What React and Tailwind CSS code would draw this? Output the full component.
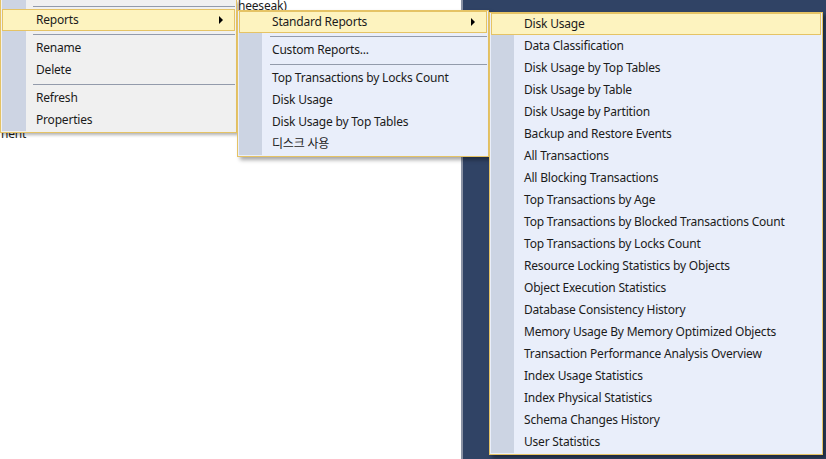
import React from "react";

const FONT = "font-['Noto_Sans','Noto_Sans_CJK_KR',sans-serif]";

const menu1 = [
  { sep: true },
  { label: "Reports", active: true, sub: true },
  { sep: true },
  { label: "Rename" },
  { label: "Delete" },
  { sep: true },
  { label: "Refresh" },
  { label: "Properties" },
];

const menu2 = [
  { label: "Standard Reports", active: true, sub: true },
  { sep: true },
  { label: "Custom Reports..." },
  { sep: true },
  { label: "Top Transactions by Locks Count" },
  { label: "Disk Usage" },
  { label: "Disk Usage by Top Tables" },
  { label: "디스크 사용" },
];

const menu3 = [
  "Disk Usage",
  "Data Classification",
  "Disk Usage by Top Tables",
  "Disk Usage by Table",
  "Disk Usage by Partition",
  "Backup and Restore Events",
  "All Transactions",
  "All Blocking Transactions",
  "Top Transactions by Age",
  "Top Transactions by Blocked Transactions Count",
  "Top Transactions by Locks Count",
  "Resource Locking Statistics by Objects",
  "Object Execution Statistics",
  "Database Consistency History",
  "Memory Usage By Memory Optimized Objects",
  "Transaction Performance Analysis Overview",
  "Index Usage Statistics",
  "Index Physical Statistics",
  "Schema Changes History",
  "User Statistics",
].map((label, i) => ({ label, active: i === 0 }));

function MenuItems({ items, textPad = "pl-[32px]" }) {
  return items.map((it, i) =>
    it.sep ? (
      <div key={i} className="h-[6px] pl-[31px] flex items-center">
        <div className="h-px w-full bg-[#939bab]" />
      </div>
    ) : (
      <div
        key={i}
        className={`h-[22px] flex items-center ${textPad} pr-[11px] border ${
          it.active ? "border-[#e5c365] bg-[#fdf3bf]" : "border-transparent"
        }`}
      >
        <span className="flex-1 whitespace-nowrap">{it.label}</span>
        {it.sub && <span className="w-0 h-0 border-y-[4px] border-y-transparent border-l-[4px] border-l-black" />}
      </div>
    )
  );
}

export default function App() {
  return (
    <div className={`relative w-[826px] h-[459px] overflow-hidden flex text-[12px] leading-[16px] tracking-[-0.2px] text-[#1b1b1b] ${FONT}`}>
      {/* window behind the menus */}
      <div className="w-[461px] bg-white flex flex-col">
        <div className="h-[10px] ml-[236px] flex items-end border-l border-[#8d95a5] pl-px overflow-hidden">
          <span className="leading-[12px] -mb-[2px]">heeseak)</span>
        </div>
        <div className="mt-[117px] pl-px leading-[14px]">nent</div>
      </div>
      <div className="w-[2px] bg-[#8a92a4]" />
      <div className="flex-1 bg-[#304365]" />

      {/* context menu */}
      <div className="absolute left-0 top-0 w-[237px] border border-t-0 border-[#e5c365] bg-[#f0f0f0] px-px pb-px shadow-[2px_2px_3px_rgba(0,0,0,0.3)]">
        <div className="bg-[linear-gradient(to_right,#cdd4e3_24px,transparent_24px)] pt-[3px]">
          <MenuItems items={menu1} textPad="pl-[33px]" />
        </div>
      </div>

      {/* reports submenu */}
      <div className="absolute left-[237px] top-[10px] w-[252px] border border-[#e5c365] bg-[#e9eefa] px-px pb-px shadow-[3px_3px_4px_rgba(0,0,0,0.35)]">
        <div className="bg-[linear-gradient(to_right,#ccd4e3_23px,transparent_23px)]">
          <MenuItems items={menu2} />
        </div>
      </div>

      {/* standard reports submenu */}
      <div className="absolute left-[489px] top-[12px] w-[334px] border border-[#e5c365] bg-[#e9eefa] px-px pb-px shadow-[3px_3px_4px_rgba(0,0,0,0.4)]">
        <div className="bg-[linear-gradient(to_right,#ccd4e3_23px,transparent_23px)]">
          <MenuItems items={menu3} />
        </div>
      </div>
    </div>
  );
}
